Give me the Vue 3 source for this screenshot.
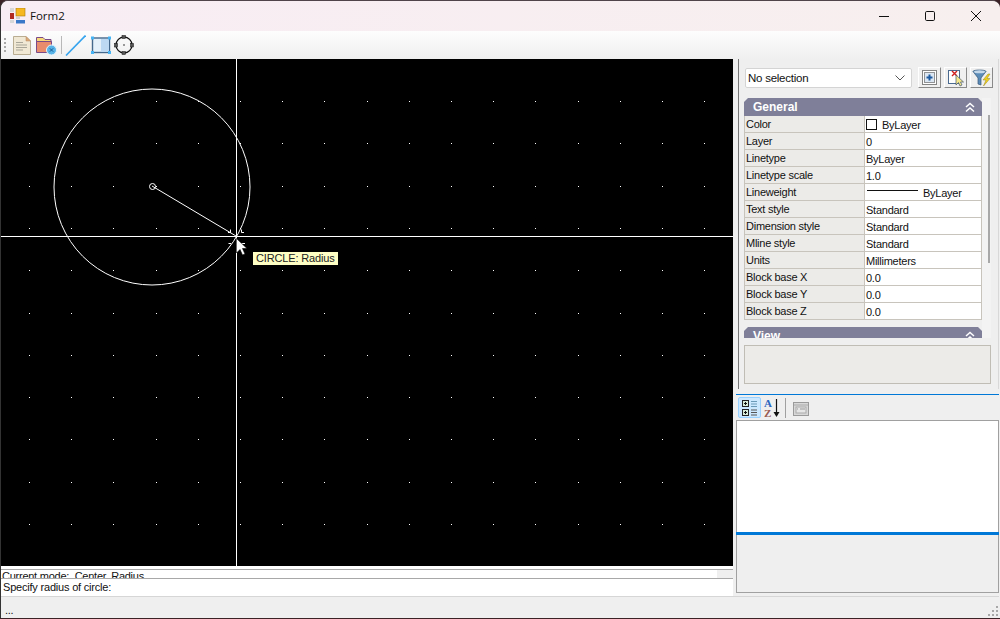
<template>
  <div class="window">
    <div class="titlebar">
      <svg class="app-icon" width="16" height="16" viewBox="0 0 16 16">
        <rect x="0" y="0" width="4" height="4" fill="#d8d8d8" />
        <rect x="0" y="5" width="4" height="6" fill="#b02a20" />
        <rect x="6" y="0" width="9" height="8" fill="#f6b820" stroke="#a87a10" stroke-width="0.6" />
        <rect x="0" y="12" width="4" height="3" fill="#d8d8d8" />
        <rect x="6" y="9" width="4" height="2" fill="#d0d0d0" />
        <rect x="6" y="12" width="9" height="3.5" fill="#3a78c8" />
      </svg>
      <span class="title-text">Form2</span>
      <div class="win-controls">
        <svg width="12" height="12" viewBox="0 0 12 12"><path d="M1 6.5H11" stroke="#111" stroke-width="1" /></svg>
        <svg width="12" height="12" viewBox="0 0 12 12"><rect x="1.5" y="1.5" width="9" height="9" rx="1.2" fill="none" stroke="#111" stroke-width="1" /></svg>
        <svg width="12" height="12" viewBox="0 0 12 12"><path d="M1 1L11 11M11 1L1 11" stroke="#111" stroke-width="1" /></svg>
      </div>
    </div>

    <div class="toolbar">
      <div class="grip"><i v-for="n in 4" :key="n"></i></div>
      <svg width="20" height="21" viewBox="0 0 20 21">
        <path d="M0.5 1.5H13L17.5 6V19.5H0.5Z" fill="#f0e8d4" stroke="#b9ad92" />
        <path d="M13 1.5V6H17.5Z" fill="#d9a878" stroke="#b98a60" stroke-width="0.5" />
        <path d="M3 7.5H10M3 10H14M3 12.5H14M3 15H10" stroke="#8a8a80" stroke-width="0.7" />
      </svg>
      <svg width="21" height="21" viewBox="0 0 21 21">
        <path d="M0.5 17V2.5H7L9 4.5H15V8H0.5" fill="#f8d878" stroke="#7a4a88" />
        <path d="M0.5 17.5V6.5H15.5V17.5Z" fill="#e88c6c" stroke="#7a4a88" />
        <circle cx="15.5" cy="15" r="5" fill="#58b4e8" stroke="#e8f4fc" />
        <path d="M13.8 13.3L17.2 16.7M17.2 13.3L13.8 16.7" stroke="#1a5a90" />
      </svg>
      <div class="tool-sep"></div>
      <svg width="21" height="21" viewBox="0 0 21 21"><path d="M1 20.5L20.5 0.5" stroke="#36a4ee" stroke-width="1.6" /></svg>
      <svg class="rect-icon" width="20" height="19" viewBox="0 0 20 19">
        <rect x="1.5" y="2" width="17" height="14.5" fill="#e4f0fa" stroke="#44688c" stroke-width="1.4" />
        <rect x="10" y="3" width="8" height="13" fill="#bcd8f2" />
        <rect x="0" y="0.5" width="3" height="3" fill="#46b4f4" /><rect x="17" y="0.5" width="3" height="3" fill="#46b4f4" />
        <rect x="0" y="15" width="3" height="3" fill="#46b4f4" /><rect x="17" y="15" width="3" height="3" fill="#46b4f4" />
      </svg>
      <svg width="20" height="20" viewBox="0 0 20 20">
        <circle cx="10" cy="10" r="8" fill="none" stroke="#111" stroke-width="1.3" />
        <circle cx="10" cy="10" r="0.8" fill="#222" />
        <rect x="8" y="0.5" width="3.5" height="3" fill="#555" stroke="#111" stroke-width="0.5" />
        <rect x="8" y="16.5" width="3.5" height="3" fill="#555" stroke="#111" stroke-width="0.5" />
        <rect x="0.5" y="8.5" width="3" height="3.5" fill="#555" stroke="#111" stroke-width="0.5" />
        <rect x="16.5" y="8.5" width="3" height="3.5" fill="#555" stroke="#111" stroke-width="0.5" />
      </svg>
    </div>

    <div class="main">
      <div class="left">
        <div class="canvas">
          <svg class="drawing" width="732" height="507" viewBox="1 59 732 507" shape-rendering="crispEdges">
            <rect v-for="d in dots" :key="d.k" :x="d.x" :y="d.y" width="1" height="1" fill="#fff" />
            <g shape-rendering="auto" fill="none" stroke="#fff">
              <circle cx="152" cy="187" r="98" />
              <circle cx="152.5" cy="186.5" r="3" />
              <path d="M152 186L236 236" />
              <path d="M228 232.5H230.5V229.5M241.5 229.5V232.5H244M228.5 243.5H231M241 243.5H245" />
            </g>
            <path d="M236.5 59V566M1 236.5H733" stroke="#fff" />
          </svg>
          <svg class="cursor" width="12" height="18" viewBox="0 0 12 18">
            <path d="M0.5 0.5V15L4 11.5L6.5 17L9 16L6.5 10.5H11Z" fill="#fff" stroke="#000" stroke-width="0.6" />
          </svg>
          <div class="tip">CIRCLE: Radius</div>
        </div>
        <div class="mode-row">
          <div class="mode-text">Current mode:&nbsp; Center, Radius</div>
          <div class="mode-scroll"></div>
        </div>
        <div class="cmd-row">Specify radius of circle:</div>
      </div>

      <div class="right">
        <div class="props">
          <div class="selector">
            <div class="combo">
              <span>No selection</span>
              <svg width="10" height="6" viewBox="0 0 10 6"><path d="M0.5 0.5L5 5L9.5 0.5" fill="none" stroke="#555" /></svg>
            </div>
            <button class="bevel">
              <svg width="15" height="15" viewBox="0 0 15 15">
                <rect x="0.5" y="0.5" width="14" height="14" fill="#fff" stroke="#111" stroke-dasharray="1 1" />
                <rect x="2.5" y="2.5" width="10" height="10" fill="#dbe6f2" stroke="#333" stroke-dasharray="1 1" />
                <path d="M7.5 4.5V10.5M4.5 7.5H10.5" stroke="#1c5aa0" stroke-width="2" />
              </svg>
            </button>
            <button class="bevel">
              <svg width="18" height="18" viewBox="0 0 18 18">
                <rect x="1.5" y="1.5" width="11" height="13" fill="#fff" stroke="#4a6a90" />
                <path d="M5 2L10 7M10 2L5 7" stroke="#d02020" stroke-width="1.4" />
                <path d="M9 6V16L11.5 13.5L13 17L15 16L13.5 13H16.5Z" fill="#f4e88c" stroke="#44556a" stroke-width="0.7" />
              </svg>
            </button>
            <button class="bevel">
              <svg width="20" height="18" viewBox="0 0 20 18">
                <path d="M1 2.5C1 0.5 14 0.5 14 2.5L9 9V16L6 15V9Z" fill="#5c8cb8" stroke="#385878" stroke-width="0.7" />
                <ellipse cx="7.5" cy="2.8" rx="5.5" ry="1.5" fill="#c4d8ea" />
                <path d="M16 5L11 11H14L11.5 17L18 9.5H15L18 5Z" fill="#f0d020" stroke="#9a8a20" stroke-width="0.5" />
              </svg>
            </button>
          </div>

          <div class="grid-wrap">
            <div class="sections">
              <div class="section-head">
                <span>General</span>
                <svg width="12" height="11" viewBox="0 0 12 11"><path d="M2 5L6 1.5L10 5M2 9.5L6 6L10 9.5" fill="none" stroke="#fff" stroke-width="1.5" /></svg>
              </div>
              <div class="rows">
                <div v-for="row in rows" :key="row.name" class="row">
                  <div class="cell-name">{{ row.name }}</div>
                  <div class="cell-value">
                    <i v-if="row.swatch" class="swatch"></i>
                    <i v-if="row.weight" class="weight"></i>
                    {{ row.value }}
                  </div>
                </div>
              </div>
              <div class="section-head view-head">
                <span>View</span>
                <svg width="12" height="11" viewBox="0 0 12 11"><path d="M2 5L6 1.5L10 5M2 9.5L6 6L10 9.5" fill="none" stroke="#fff" stroke-width="1.5" /></svg>
              </div>
            </div>
            <div class="scrollbar"><i></i></div>
          </div>

          <div class="help-box"></div>
        </div>

        <div class="tools2">
          <button class="active-tool">
            <svg width="18" height="18" viewBox="0 0 18 18">
              <rect x="1.5" y="1.5" width="6" height="6" fill="#d8ecd8" stroke="#222" /><path d="M3 4.5H6M4.5 3V6" stroke="#111" />
              <rect x="1.5" y="10.5" width="6" height="6" fill="#d8ecd8" stroke="#222" /><path d="M3 13.5H6M4.5 12V15" stroke="#111" />
              <path d="M10 2.5H16M10 5H16M10 7.5H16" stroke="#6a9ab8" /><path d="M10 11H16M10 13.5H16M10 16H16" stroke="#555" />
            </svg>
          </button>
          <svg class="az" width="17" height="20" viewBox="0 0 17 20">
            <text x="0" y="9" class="az-a">A</text>
            <text x="0" y="19" class="az-z">Z</text>
            <path d="M12.5 1V17" stroke="#111" stroke-width="1.2" /><path d="M9.5 14L12.5 19L15.5 14Z" fill="#111" />
          </svg>
          <div class="tool-sep2"></div>
          <svg width="16" height="16" viewBox="0 0 16 16">
            <rect x="0.5" y="2.5" width="15" height="13" fill="#d8d8d8" stroke="#9a9a9a" />
            <path d="M1 5H15" stroke="#aaa" /><rect x="3" y="7" width="10" height="6" fill="#e6e6e6" stroke="#aaa" />
            <path d="M4 9H5M7 9H12" stroke="#999" />
          </svg>
        </div>

        <div class="white-box"></div>
        <div class="blue-bar"></div>
        <div class="grey-box"></div>
      </div>
    </div>

    <div class="status">
      <span>...</span>
      <div class="size-grip"><i v-for="n in 6" :key="n"></i></div>
    </div>
  </div>
</template>

<script setup>
const rows = [
  { name: 'Color', value: 'ByLayer', swatch: true },
  { name: 'Layer', value: '0' },
  { name: 'Linetype', value: 'ByLayer' },
  { name: 'Linetype scale', value: '1.0' },
  { name: 'Lineweight', value: 'ByLayer', weight: true },
  { name: 'Text style', value: 'Standard' },
  { name: 'Dimension style', value: 'Standard' },
  { name: 'Mline style', value: 'Standard' },
  { name: 'Units', value: 'Millimeters' },
  { name: 'Block base X', value: '0.0' },
  { name: 'Block base Y', value: '0.0' },
  { name: 'Block base Z', value: '0.0' }
]

// grid of snap points on the drawing
const dots = []
for (let i = 0; i < 18; i++) {
  for (let j = 0; j < 12; j++) {
    const x = Math.round(29 + i * 42.2)
    const y = Math.round(101 + j * 42.3)
    dots.push({ k: i + '-' + j, x, y })
  }
}
</script>

<style>
html, body {
  margin: 0;
  background: #3c2226;
}
</style>

<style scoped>
.window {
  width: 1000px;
  height: 618px;
  box-sizing: border-box;
  display: flex;
  flex-direction: column;
  border-radius: 8px 8px 0 0;
  border-top: 1px solid #50444a;
  border-left: 1px solid #333;
  background: #efefef;
  overflow: hidden;
  font-family: "Liberation Sans", Arial, sans-serif;
  font-size: 11px;
  letter-spacing: -0.25px;
  color: #111;
}

.titlebar {
  flex: none;
  height: 30px;
  display: flex;
  align-items: center;
  padding-left: 9px;
  background: linear-gradient(90deg, #f8edf4, #f7efee);
}
.app-icon {
  margin-top: -1px;
}
.title-text {
  margin: -2px 0 0 4px;
  font-family: "Open Sans", sans-serif;
  font-size: 11.5px;
  letter-spacing: 0;
  color: #111;
}
.win-controls {
  margin-left: auto;
  display: flex;
  gap: 34px;
  padding-right: 18px;
}

.toolbar {
  flex: none;
  height: 28px;
  display: flex;
  align-items: center;
  padding-left: 3px;
  gap: 3px;
  background: linear-gradient(#fdfdfd, #efefef);
}
.grip {
  display: flex;
  flex-direction: column;
  gap: 2px;
  width: 6px;
}
.grip i {
  width: 2px;
  height: 2px;
  background: #a8a8a8;
}
.tool-sep {
  width: 1px;
  height: 18px;
  margin-left: 1px;
  background: #b8b8b8;
}
.rect-icon {
  margin-left: 2px;
}

.main {
  flex: none;
  height: 537px;
  display: flex;
}

.left {
  width: 732px;
  background: #fff;
  display: flex;
  flex-direction: column;
}
.canvas {
  position: relative;
  height: 507px;
  background: #000;
  overflow: hidden;
}
.drawing {
  display: block;
}
.cursor {
  position: absolute;
  left: 235px;
  top: 179px;
}
.tip {
  position: absolute;
  left: 252px;
  top: 193px;
  height: 13px;
  line-height: 13px;
  padding: 0 3px;
  background: #ffffc4;
  color: #222;
  font-size: 11px;
  letter-spacing: -0.15px;
  white-space: nowrap;
}
.mode-row {
  margin-top: 3px;
  height: 8px;
  border-top: 1px solid #a8a8a8;
  border-bottom: 1px solid #a8a8a8;
  display: flex;
  overflow: hidden;
}
.mode-text {
  flex: 1;
  padding-left: 1px;
  line-height: 13px;
  white-space: nowrap;
}
.mode-scroll {
  width: 16px;
  background: #efefef;
}
.cmd-row {
  height: 15px;
  line-height: 16px;
  padding-left: 2px;
  letter-spacing: -0.2px;
}

.right {
  width: 263px;
  margin-left: 3px;
  display: flex;
  flex-direction: column;
}
.props {
  height: 330px;
  box-sizing: border-box;
  margin-left: 2px;
  border-left: 1px solid #777;
  border-right: 1px solid #d8d8d8;
  padding: 9px 0 0 5px;
}
.selector {
  display: flex;
  align-items: flex-start;
  gap: 3px;
  margin-left: 1px;
}
.combo {
  width: 167px;
  height: 20px;
  box-sizing: border-box;
  margin-right: 3px;
  display: flex;
  align-items: center;
  justify-content: space-between;
  padding: 0 6px 0 2px;
  background: #fff;
  border: 1px solid #d4d4d4;
  border-radius: 2px;
  font-size: 11.5px;
}
.bevel {
  width: 23px;
  height: 21px;
  margin-top: -1px;
  padding: 0;
  display: flex;
  align-items: center;
  justify-content: center;
  background: #f0f0f0;
  border: 1px solid;
  border-color: #fff #8a8a8a #8a8a8a #fff;
}

.grid-wrap {
  display: flex;
  height: 240px;
  margin-top: 10px;
  overflow: hidden;
}
.sections {
  width: 238px;
}
.section-head {
  height: 18px;
  display: flex;
  align-items: center;
  justify-content: space-between;
  padding: 0 6px 0 9px;
  background: #7f7f99;
  color: #fff;
  font-size: 12px;
  font-weight: bold;
  letter-spacing: 0;
  clip-path: polygon(4px 0, calc(100% - 4px) 0, 100% 4px, 100% 100%, 0 100%, 0 4px);
}
.view-head {
  margin-top: 7px;
}
.rows {
  background: #c8c4bc;
  padding: 0 1px;
  height: 204px;
  overflow: hidden;
}
.row {
  display: flex;
  height: 17px;
  box-sizing: border-box;
  border-bottom: 1px solid #c8c4bc;
}
.cell-name {
  width: 118px;
  margin-right: 1px;
  padding-left: 1px;
  background: #ecebe8;
  line-height: 16px;
  white-space: nowrap;
}
.cell-value {
  flex: 1;
  padding: 2px 0 0 1px;
  background: #fff;
  line-height: 14px;
  white-space: nowrap;
  display: flex;
  align-items: center;
}
.swatch {
  width: 9px;
  height: 9px;
  margin: -2px 5px 0 0;
  border: 1px solid #111;
}
.weight {
  width: 51px;
  height: 1px;
  margin: -5px 5px 0 1px;
  background: #111;
}
.scrollbar {
  width: 9px;
  background: #f3f3f3;
}
.scrollbar i {
  display: block;
  width: 2px;
  height: 148px;
  margin: 17px 0 0 6px;
  background: #a8a8a8;
}
.help-box {
  width: 247px;
  height: 39px;
  box-sizing: border-box;
  margin-top: 7px;
  background: #ecebe8;
  border: 1px solid #c0bdb5;
}

.tools2 {
  margin-top: 5px;
  height: 26px;
  box-sizing: border-box;
  border-top: 1px solid #0078d7;
  display: flex;
  align-items: center;
  padding-left: 2px;
  gap: 3px;
}
.active-tool {
  width: 23px;
  height: 21px;
  padding: 0;
  display: flex;
  align-items: center;
  justify-content: center;
  background: #cce8ff;
  border: 1px solid #99d1ff;
  border-radius: 2px;
}
.az-a, .az-z {
  font-family: "Liberation Serif", serif;
  font-size: 11px;
  font-weight: bold;
}
.az-a {
  fill: #2a64c0;
}
.az-z {
  fill: #9a5a50;
}
.tool-sep2 {
  width: 1px;
  height: 20px;
  margin: 0 4px 0 1px;
  background: #a0a0a0;
}
.white-box {
  height: 112px;
  box-sizing: border-box;
  background: #fff;
  border: 1px solid #a0a0a0;
  border-bottom: 0;
}
.blue-bar {
  height: 3px;
  background: #0078d7;
}
.grey-box {
  height: 58px;
  box-sizing: border-box;
  border: 1px solid #a0a0a0;
  border-top: 0;
}

.status {
  position: relative;
  flex: 1;
  min-height: 0;
  border-top: 1px solid #d6d6d6;
  margin-right: 1px;
  padding-left: 4px;
  line-height: 26px;
  overflow: hidden;
}
.size-grip {
  position: absolute;
  right: 1px;
  bottom: 2px;
  display: grid;
  grid-template-columns: repeat(3, 2px);
  grid-template-rows: repeat(3, 2px);
  gap: 2px;
}
.size-grip i {
  background: #a8a8a8;
}
.size-grip i:nth-child(1) {
  grid-column: 3;
  grid-row: 1;
}
.size-grip i:nth-child(2) {
  grid-column: 2;
  grid-row: 2;
}
.size-grip i:nth-child(3) {
  grid-column: 3;
  grid-row: 2;
}
.size-grip i:nth-child(4) {
  grid-column: 1;
  grid-row: 3;
}
.size-grip i:nth-child(5) {
  grid-column: 2;
  grid-row: 3;
}
.size-grip i:nth-child(6) {
  grid-column: 3;
  grid-row: 3;
}
</style>
